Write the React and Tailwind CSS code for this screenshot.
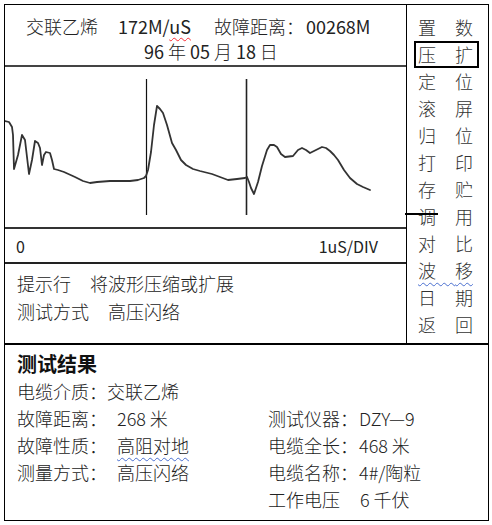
const menu = [
  ['置', '数'],
  ['压', '扩'],
  ['定', '位'],
  ['滚', '屏'],
  ['归', '位'],
  ['打', '印'],
  ['存', '贮'],
  ['调', '用'],
  ['对', '比'],
  ['波', '移'],
  ['日', '期'],
  ['返', '回'],
]

const wave =
  'M5,121 L9,122 L12,127 L13,135 L14,169 L18,155 L22,135 L25,140 L29,174 L32,160 L35,141 L38,143 L40,148 L42,165 L44,155 L46,152 L50,153 L52,160 L54,169 L58,170 L64,172 L75,177 L83,181 L90,183 L97,182 L110,181 L130,181 L138,180 L144,178 L146,176 L148,170 L151,152 L154,125 L157,106 L160,109 L163,113 L167,125 L172,143 L176,150 L181,160 L186,165 L193,169 L200,171 L212,174 L220,177 L228,180 L237,179 L245,178 L247,177 L249,182 L251,188 L254,194 L258,182 L262,166 L267,150 L270,145 L274,145 L277,147 L281,154 L285,157 L293,156 L298,150 L302,148 L306,150 L310,153 L314,151 L318,149 L322,147 L326,148 L330,151 L334,155 L338,160 L344,170 L350,178 L357,184 L363,187 L370,190'

const MenuPanel = () => (
  <div className="relative w-[82px] border-t border-r border-black pt-[9px] text-[18px] font-light leading-[27px] text-[#333]">
    {menu.map(([a, b], i) => {
      if (i === 1) {
        return (
          <div key={i} className="ml-[7px] h-[27px] w-[65px] border-2 border-black pl-[2px] leading-[23px]">
            <span className="tracking-[19px]">{a}</span>
            {b}
          </div>
        )
      }
      return (
        <div key={i} className="h-[27px] pl-[11px]">
          <span className={i === 9 ? 'underline decoration-wavy decoration-[#4a6fd0] decoration-1 underline-offset-[4px]' : ''}>
            <span className="tracking-[19px]">{a}</span>
            {b}
          </span>
        </div>
      )
    })}
    {/* stray line over 调 */}
    <div className="absolute left-[-2px] top-[208px] h-[2px] w-[33px] bg-black" />
  </div>
)

const Row = ({ label, value, gap = 'ml-[10px]', wavy }) => (
  <div className="flex">
    <span>{label}</span>
    <span className={`${gap} ${wavy ? 'underline decoration-wavy decoration-[#4a6fd0] decoration-1 underline-offset-[4px]' : ''}`}>{value}</span>
  </div>
)

export default function App() {
  return (
    <div className="min-h-[525px] w-[492px] bg-white pl-[4px] pt-[4px] font-['Noto_Sans_CJK_SC',sans-serif] font-light text-[#222]">
      <div className="w-[485px]">
        <div className="flex">
          {/* left column */}
          <div className="w-[403px] border-x border-t border-black">
            {/* header */}
            <div className="h-[62px] border-b-2 border-[#444] pt-[9px] text-[18px] leading-[25px]">
              <div className="flex pl-[21px]">
                <span>交联乙烯</span>
                <span className="ml-[20px] font-normal">
                  172M/<span className="underline decoration-wavy decoration-red-500 decoration-1 underline-offset-[3px]">uS</span>
                </span>
                <span className="ml-[23px]">故障距离：</span>
                <span className="ml-[2px] font-normal">00268M</span>
              </div>
              <div className="pl-[139px]">
                <span className="font-normal">96</span> 年 <span className="font-normal">05</span> 月 <span className="font-normal">18</span> 日
              </div>
            </div>
            {/* chart */}
            <div className="h-[162px] border-b-2 border-[#333]">
              <svg width="401" height="160" viewBox="5 67 401 160" className="block">
                <line x1="146.5" y1="79" x2="146.5" y2="215" stroke="#111" strokeWidth="1.2" />
                <line x1="246.5" y1="79" x2="246.5" y2="215" stroke="#222" strokeWidth="1.6" />
                <path d={wave} fill="none" stroke="#333" strokeWidth="1.8" strokeLinejoin="round" strokeLinecap="round" />
              </svg>
            </div>
            {/* axis */}
            <div className="flex h-[35px] items-center justify-between border-b-2 border-[#222] pl-[11px] pr-[28px] text-[16px] font-normal">
              <span>0</span>
              <span>1uS/DIV</span>
            </div>
            {/* prompt */}
            <div className="h-[79px] pl-[12px] pt-[5px] text-[18px] leading-[28px]">
              <div className="flex">
                <span>提示行</span>
                <span className="ml-[19px]">将波形压缩或扩展</span>
              </div>
              <div className="flex">
                <span>测试方式</span>
                <span className="ml-[19px]">高压闪络</span>
              </div>
            </div>
          </div>
          <MenuPanel />
        </div>

        {/* results */}
        <div className="h-[178px] border-x border-b border-t-2 border-black pl-[12px] pt-[5px] text-[18px] leading-[27px]">
          <div className="text-[20px] font-bold leading-[28px] text-[#111]">测试结果</div>
          <div className="flex">
            <div className="w-[251px]">
              <Row label="电缆介质：" value="交联乙烯" gap="ml-0" />
              <Row label="故障距离：" value="268 米" />
              <Row label="故障性质：" value="高阻对地" wavy />
              <Row label="测量方式：" value="高压闪络" />
            </div>
            <div className="pt-[27px]">
              <Row label="测试仪器：" value="DZY—9" gap="ml-[1px]" />
              <Row label="电缆全长：" value="468 米" gap="ml-[1px]" />
              <Row label="电缆名称：" value="4#/陶粒" gap="ml-[1px]" />
              <Row label="工作电压" value="6 千伏" gap="ml-[20px]" />
            </div>
          </div>
        </div>
      </div>
    </div>
  )
}
